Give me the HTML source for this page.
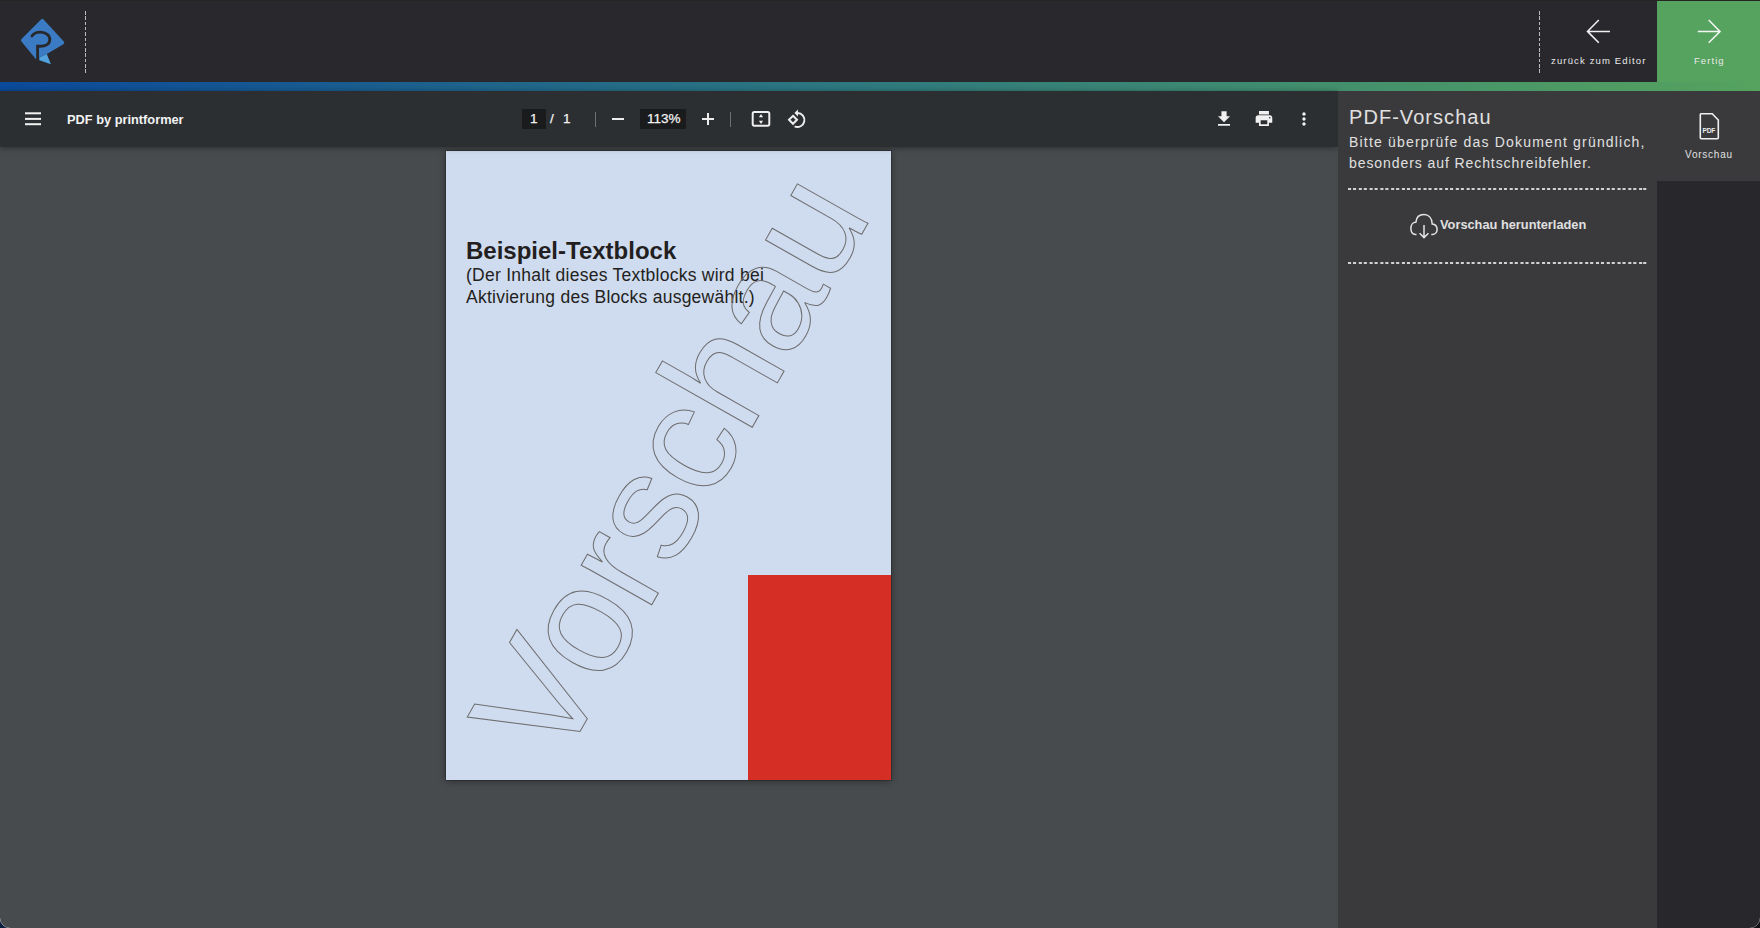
<!DOCTYPE html>
<html><head><meta charset="utf-8">
<style>
*{margin:0;padding:0;box-sizing:border-box}
html,body{width:1760px;height:928px;overflow:hidden;background:#48494c;font-family:"Liberation Sans",sans-serif}
.abs{position:absolute}
#topline{left:0;top:0;width:1760px;height:1px;background:#252523}
#topbar{left:0;top:1px;width:1760px;height:81px;background:#28282d}
#grad{left:0;top:82px;width:1760px;height:9px;background:linear-gradient(90deg,#0b4a9b 0%,#2f7a7e 50%,#55a35e 100%)}
#green{left:1657px;top:1px;width:103px;height:81px;background:#55a35e}
#toolbar{left:0;top:91px;width:1338px;height:56px;background:#2c2f32;box-shadow:0 1px 6px rgba(0,0,0,.4)}
#viewer{left:0;top:147px;width:1338px;height:781px;background:#484b4e}
#page{left:446px;top:151px;width:445px;height:629px;background:#cfdbef;box-shadow:0 0 0 1px rgba(0,0,0,.18),0 1px 7px rgba(0,0,0,.42);overflow:hidden}
#panel{left:1338px;top:91px;width:319px;height:837px;background:#3a3a3c}
#strip{left:1657px;top:91px;width:103px;height:837px;background:#28282c}
#tab{left:1657px;top:91px;width:103px;height:90px;background:#3a3a3c}
.vdash{width:1.4px;background:repeating-linear-gradient(180deg,#bcbcbc 0 3.5px,transparent 3.5px 5.3px)}
.lbl{color:#e9e9e9;font-size:9.5px;line-height:12px;white-space:nowrap}
.st{color:#e0e0e0;white-space:nowrap;position:absolute}
.tbt{color:#f3f3f3;white-space:nowrap;line-height:16px;-webkit-text-stroke:0.25px #f3f3f3}
.pt{position:absolute;color:#231f20;white-space:nowrap;line-height:1}
.hdash{height:0;border-top:2px dotted #d9d9d9}
</style></head>
<body>
<div class="abs" id="topline"></div>
<div class="abs" id="topbar"></div>
<div class="abs" id="grad"></div>
<div class="abs" id="green"></div>

<!-- logo -->
<svg class="abs" style="left:0;top:0" width="80" height="80" viewBox="0 0 80 80">
  <path d="M41.3 19.2 Q42.3 18.2 43.3 19.2 L63.6 41.2 Q65.2 43.2 63 44.4 L46.8 54.1 L39.4 57.6 L39.4 60.3 L35.8 59 L21.4 41.6 Q20.3 40.2 21.5 39 Z" fill="#3a7bc3"/>
  <path d="M39.4 57.4 L46.8 54.1 L50.9 64.2 L39.4 60.3 Z" fill="#52a2de"/>
  <path d="M32 36 C34 33 37 32 40.5 32.1 C46 32.3 49.9 35.4 49.8 39.6 C49.7 44 45.4 46.3 40.5 46.3 L37.6 46.3 L37.6 61" fill="none" stroke="#28282d" stroke-width="2.9" stroke-linecap="round"/>
</svg>

<div class="abs vdash" style="left:84.9px;top:10.7px;height:62px"></div>
<div class="abs vdash" style="left:1538.8px;top:10.5px;height:62px"></div>

<!-- back arrow -->
<svg class="abs" style="left:1585px;top:18px" width="28" height="28" viewBox="0 0 28 28">
  <path d="M2.5 13.4 H25 M13.8 2 L2.5 13.4 L13.8 24.8" fill="none" stroke="#f0f0f0" stroke-width="1.55"/>
</svg>
<div class="abs lbl" style="left:1551px;top:55px;letter-spacing:1.15px">zurück zum Editor</div>

<svg class="abs" style="left:1695px;top:18px" width="28" height="28" viewBox="0 0 28 28">
  <path d="M2.8 13.5 H25 M13.7 2 L25 13.5 L13.7 24.8" fill="none" stroke="#f5f5f5" stroke-width="1.55"/>
</svg>
<div class="abs lbl" style="left:1694px;top:55px;letter-spacing:1.06px">Fertig</div>

<div class="abs" id="viewer"></div>
<div class="abs" id="page">
  <div class="pt" style="left:20px;top:88px;font-size:24px;font-weight:bold">Beispiel-Textblock</div>
  <div class="pt" style="left:20px;top:116px;font-size:17.5px;letter-spacing:0.25px">(Der Inhalt dieses Textblocks wird bei</div>
  <div class="pt" style="left:20px;top:138px;font-size:17.5px;letter-spacing:0.25px">Aktivierung des Blocks ausgewählt.)</div>
  <div class="abs" style="left:302px;top:424px;width:143px;height:205px;background:#d52e25"></div>
  <svg class="abs" style="left:0;top:0" width="445" height="629" viewBox="0 0 445 629">
    <text x="0" y="0" transform="translate(112.4 618.5) rotate(-60.45)" font-family="Liberation Sans" font-size="153" fill="none" stroke="#6e6e6e" stroke-width="1">Vorschau</text>
  </svg>
</div>
<div class="abs" id="toolbar"></div>
<div class="abs" id="panel"></div>
<div class="abs" id="strip"></div>
<div class="abs" id="tab"></div>

<!-- pdf toolbar content -->
<svg class="abs" style="left:0;top:91px" width="1338" height="56" viewBox="0 91 1338 56">
  <g fill="#f1f1f1">
    <rect x="25" y="112.3" width="16" height="2"/>
    <rect x="25" y="117.9" width="16" height="2"/>
    <rect x="25" y="123.2" width="16" height="2"/>
  </g>
  <rect x="522" y="109" width="24" height="20" fill="#191b1d"/>
  <rect x="640" y="109" width="46" height="20" fill="#191b1d"/>
  <rect x="595" y="112" width="1" height="15" fill="#6d7073"/>
  <rect x="730" y="112" width="1" height="15" fill="#6d7073"/>
  <rect x="612" y="118" width="12" height="2" fill="#ececec"/>
  <rect x="702" y="118" width="12" height="2" fill="#ececec"/>
  <rect x="707" y="113" width="2" height="12" fill="#ececec"/>
  <!-- fit -->
  <rect x="752.7" y="112.1" width="16.6" height="13.6" rx="1.6" fill="none" stroke="#efefef" stroke-width="2"/>
  <path d="M758.9 117.3 L761 114 L763.1 117.3 Z M758.9 120.7 L761 124 L763.1 120.7 Z" fill="#efefef"/>
  <!-- rotate -->
  <path d="M793 115.8 L797 119.8 L793 123.8 L789 119.8 Z" fill="none" stroke="#efefef" stroke-width="2"/>
  <path d="M797.5 113 A7 7 0 1 1 794.6 126.4" fill="none" stroke="#efefef" stroke-width="1.9"/>
  <path d="M798 109.6 L794.4 113 L798 116.4 Z" fill="#efefef"/>
  <!-- download -->
  <g transform="translate(1213.7 108.6) scale(0.86)" fill="#f1f1f1"><path d="M19 9h-4V3H9v6H5l7 7 7-7zM5 18v2h14v-2H5z"/></g>
  <!-- print -->
  <g transform="translate(1254 108.6) scale(0.83)" fill="#f1f1f1"><path d="M19 8H5c-1.66 0-3 1.34-3 3v6h4v4h12v-4h4v-6c0-1.660-1.34-3-3-3zm-3 11H8v-5h8v5zm3-7c-.55 0-1-.45-1-1s.45-1 1-1 1 .45 1 1-.45 1-1 1zm-1-9H6v4h12V3z"/></g>
  <!-- more -->
  <g transform="translate(1294 109) scale(0.833)" fill="#f1f1f1"><path d="M12 8c1.1 0 2-.9 2-2s-.9-2-2-2-2 .9-2 2 .9 2 2 2zm0 2c-1.1 0-2 .9-2 2s.9 2 2 2 2-.9 2-2-.9-2-2-2zm0 6c-1.1 0-2 .9-2 2s.9 2 2 2 2-.9 2-2-.9-2-2-2z"/></g>
</svg>
<div class="abs tbt" style="left:67px;top:112px;font-weight:bold;font-size:12.8px;-webkit-text-stroke:0">PDF by printformer</div>
<div class="abs tbt" style="left:530px;top:111px;font-size:13.5px">1</div>
<div class="abs tbt" style="left:550px;top:111px;font-size:13.5px">/</div>
<div class="abs tbt" style="left:563px;top:111px;font-size:13.5px">1</div>
<div class="abs tbt" style="left:647px;top:111px;font-size:13.5px">113%</div>

<!-- sidebar -->
<div class="st" style="left:1349px;top:106px;font-size:20px;line-height:22px;letter-spacing:1.05px">PDF-Vorschau</div>
<div class="st" style="left:1349px;top:134px;font-size:14px;line-height:16px;letter-spacing:1.18px">Bitte überprüfe das Dokument gründlich,</div>
<div class="st" style="left:1349px;top:155px;font-size:14px;line-height:16px;letter-spacing:0.92px">besonders auf Rechtschreibfehler.</div>
<svg class="abs" style="left:1347.8px;top:188px" width="300" height="2" viewBox="0 0 300 2" fill="#d2d2d2"><rect x="0.00" y="0" width="3.1" height="2"/><rect x="5.00" y="0" width="3.1" height="2"/><rect x="10.78" y="0" width="3.1" height="2"/><rect x="15.78" y="0" width="3.1" height="2"/><rect x="21.56" y="0" width="3.1" height="2"/><rect x="26.56" y="0" width="3.1" height="2"/><rect x="32.34" y="0" width="3.1" height="2"/><rect x="37.34" y="0" width="3.1" height="2"/><rect x="43.12" y="0" width="3.1" height="2"/><rect x="48.12" y="0" width="3.1" height="2"/><rect x="53.90" y="0" width="3.1" height="2"/><rect x="58.90" y="0" width="3.1" height="2"/><rect x="64.68" y="0" width="3.1" height="2"/><rect x="69.68" y="0" width="3.1" height="2"/><rect x="75.46" y="0" width="3.1" height="2"/><rect x="80.46" y="0" width="3.1" height="2"/><rect x="86.24" y="0" width="3.1" height="2"/><rect x="91.24" y="0" width="3.1" height="2"/><rect x="97.02" y="0" width="3.1" height="2"/><rect x="102.02" y="0" width="3.1" height="2"/><rect x="107.80" y="0" width="3.1" height="2"/><rect x="112.80" y="0" width="3.1" height="2"/><rect x="118.58" y="0" width="3.1" height="2"/><rect x="123.58" y="0" width="3.1" height="2"/><rect x="129.36" y="0" width="3.1" height="2"/><rect x="134.36" y="0" width="3.1" height="2"/><rect x="140.14" y="0" width="3.1" height="2"/><rect x="145.14" y="0" width="3.1" height="2"/><rect x="150.92" y="0" width="3.1" height="2"/><rect x="155.92" y="0" width="3.1" height="2"/><rect x="161.70" y="0" width="3.1" height="2"/><rect x="166.70" y="0" width="3.1" height="2"/><rect x="172.48" y="0" width="3.1" height="2"/><rect x="177.48" y="0" width="3.1" height="2"/><rect x="183.26" y="0" width="3.1" height="2"/><rect x="188.26" y="0" width="3.1" height="2"/><rect x="194.04" y="0" width="3.1" height="2"/><rect x="199.04" y="0" width="3.1" height="2"/><rect x="204.82" y="0" width="3.1" height="2"/><rect x="209.82" y="0" width="3.1" height="2"/><rect x="215.60" y="0" width="3.1" height="2"/><rect x="220.60" y="0" width="3.1" height="2"/><rect x="226.38" y="0" width="3.1" height="2"/><rect x="231.38" y="0" width="3.1" height="2"/><rect x="237.16" y="0" width="3.1" height="2"/><rect x="242.16" y="0" width="3.1" height="2"/><rect x="247.94" y="0" width="3.1" height="2"/><rect x="252.94" y="0" width="3.1" height="2"/><rect x="258.72" y="0" width="3.1" height="2"/><rect x="263.72" y="0" width="3.1" height="2"/><rect x="269.50" y="0" width="3.1" height="2"/><rect x="274.50" y="0" width="3.1" height="2"/><rect x="280.28" y="0" width="3.1" height="2"/><rect x="285.28" y="0" width="3.1" height="2"/><rect x="291.06" y="0" width="3.1" height="2"/><rect x="295.2" y="0" width="3.1" height="2"/></svg>
<svg class="abs" style="left:1347.8px;top:262px" width="300" height="2" viewBox="0 0 300 2" fill="#d2d2d2"><rect x="0.00" y="0" width="3.1" height="2"/><rect x="5.00" y="0" width="3.1" height="2"/><rect x="10.78" y="0" width="3.1" height="2"/><rect x="15.78" y="0" width="3.1" height="2"/><rect x="21.56" y="0" width="3.1" height="2"/><rect x="26.56" y="0" width="3.1" height="2"/><rect x="32.34" y="0" width="3.1" height="2"/><rect x="37.34" y="0" width="3.1" height="2"/><rect x="43.12" y="0" width="3.1" height="2"/><rect x="48.12" y="0" width="3.1" height="2"/><rect x="53.90" y="0" width="3.1" height="2"/><rect x="58.90" y="0" width="3.1" height="2"/><rect x="64.68" y="0" width="3.1" height="2"/><rect x="69.68" y="0" width="3.1" height="2"/><rect x="75.46" y="0" width="3.1" height="2"/><rect x="80.46" y="0" width="3.1" height="2"/><rect x="86.24" y="0" width="3.1" height="2"/><rect x="91.24" y="0" width="3.1" height="2"/><rect x="97.02" y="0" width="3.1" height="2"/><rect x="102.02" y="0" width="3.1" height="2"/><rect x="107.80" y="0" width="3.1" height="2"/><rect x="112.80" y="0" width="3.1" height="2"/><rect x="118.58" y="0" width="3.1" height="2"/><rect x="123.58" y="0" width="3.1" height="2"/><rect x="129.36" y="0" width="3.1" height="2"/><rect x="134.36" y="0" width="3.1" height="2"/><rect x="140.14" y="0" width="3.1" height="2"/><rect x="145.14" y="0" width="3.1" height="2"/><rect x="150.92" y="0" width="3.1" height="2"/><rect x="155.92" y="0" width="3.1" height="2"/><rect x="161.70" y="0" width="3.1" height="2"/><rect x="166.70" y="0" width="3.1" height="2"/><rect x="172.48" y="0" width="3.1" height="2"/><rect x="177.48" y="0" width="3.1" height="2"/><rect x="183.26" y="0" width="3.1" height="2"/><rect x="188.26" y="0" width="3.1" height="2"/><rect x="194.04" y="0" width="3.1" height="2"/><rect x="199.04" y="0" width="3.1" height="2"/><rect x="204.82" y="0" width="3.1" height="2"/><rect x="209.82" y="0" width="3.1" height="2"/><rect x="215.60" y="0" width="3.1" height="2"/><rect x="220.60" y="0" width="3.1" height="2"/><rect x="226.38" y="0" width="3.1" height="2"/><rect x="231.38" y="0" width="3.1" height="2"/><rect x="237.16" y="0" width="3.1" height="2"/><rect x="242.16" y="0" width="3.1" height="2"/><rect x="247.94" y="0" width="3.1" height="2"/><rect x="252.94" y="0" width="3.1" height="2"/><rect x="258.72" y="0" width="3.1" height="2"/><rect x="263.72" y="0" width="3.1" height="2"/><rect x="269.50" y="0" width="3.1" height="2"/><rect x="274.50" y="0" width="3.1" height="2"/><rect x="280.28" y="0" width="3.1" height="2"/><rect x="285.28" y="0" width="3.1" height="2"/><rect x="291.06" y="0" width="3.1" height="2"/><rect x="295.2" y="0" width="3.1" height="2"/></svg>
<svg class="abs" style="left:1400px;top:205px" width="50" height="40" viewBox="0 0 50 40">
  <path d="M16.5 29.4 H15.5 C12.5 29.4 10.9 27 10.9 23.5 C10.9 20 13 17.3 15.8 17.3 C16.3 12.5 19.5 9.6 24 9.6 C28.5 9.6 32 13 32.2 19 C35 19.3 37.1 21.5 37.1 24.5 C37.1 27.5 35 29.4 32.5 29.4 H31.3" fill="none" stroke="#e4e4e4" stroke-width="1.5"/>
  <path d="M24 20 V32.6 M19.6 28.2 L24 32.6 L28.4 28.2" fill="none" stroke="#e4e4e4" stroke-width="1.5"/>
</svg>
<div class="st" style="left:1440px;top:218px;font-size:12.8px;line-height:14px;font-weight:bold">Vorschau herunterladen</div>

<!-- tab -->
<svg class="abs" style="left:1695px;top:110px" width="28" height="32" viewBox="0 0 28 32">
  <path d="M5.3 3.8 H17.2 L23.3 10 V27.8 Q23.3 28.8 22.3 28.8 H6.3 Q5.3 28.8 5.3 27.8 V4.8 Q5.3 3.8 6.3 3.8 Z" fill="none" stroke="#f0f0f0" stroke-width="1.6"/>
</svg>
<div class="st" style="left:1702.5px;top:127.3px;font-size:6.6px;line-height:8px;font-weight:bold;letter-spacing:-0.2px;color:#eeeeee">PDF</div>
<div class="st" style="left:1685px;top:149px;font-size:10px;line-height:12px;letter-spacing:0.76px">Vorschau</div>


<svg class="abs" style="left:0;top:918px" width="11" height="10" viewBox="0 0 11 10"><path d="M0 0 A10 10 0 0 0 10 10 L0 10 Z" fill="#0b1f3f"/><path d="M0 0 A10 10 0 0 0 10 10" stroke="#80858a" stroke-width="1" fill="none"/></svg>
<svg class="abs" style="left:1749px;top:918px" width="11" height="10" viewBox="0 0 11 10"><path d="M11 0 A10 10 0 0 1 1 10 L11 10 Z" fill="#111113"/><path d="M11 0 A10 10 0 0 1 1 10" stroke="#6a6a6e" stroke-width="1" fill="none"/></svg>
</body></html>
